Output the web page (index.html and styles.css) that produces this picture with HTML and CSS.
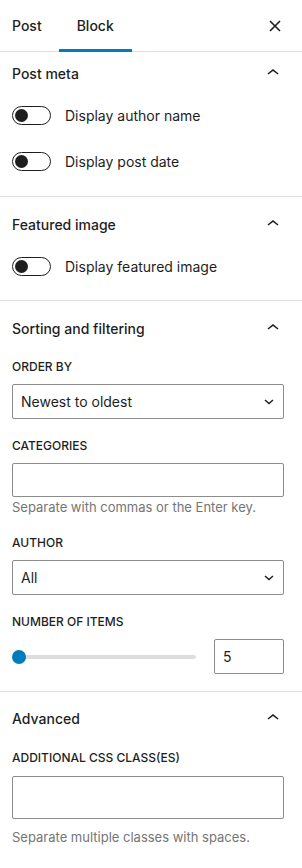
FILE: index.html
```html
<!DOCTYPE html>
<html lang="en">
<head>
    <meta charset="UTF-8">
    <meta name="viewport" content="width=device-width, initial-scale=1.0">
    <title>Block settings</title>
    <link rel="stylesheet" href="styles.css">
</head>
<body>
    <div class="sidebar">
        <div class="tabs">
            <button class="tab tab-first">Post</button>
            <button class="tab is-active">Block</button>
            <button class="close-btn" aria-label="Close settings">
                <svg width="12" height="12" viewBox="0 0 12 12"><path d="M1 1L11 11M11 1L1 11" stroke="#1e1e1e" stroke-width="1.6" fill="none"/></svg>
            </button>
        </div>

        <div class="panel panel-first">
            <div class="panel-title">
                <span>Post meta</span>
                <svg class="chevron" width="24" height="24" viewBox="0 0 24 24"><path d="M6.5 12.4L12 8l5.5 4.4-.9 1.2L12 10l-4.6 3.6-.9-1.2z"/></svg>
            </div>
            <div class="toggle-row">
                <span class="toggle"><span class="knob"></span></span>
                <span>Display author name</span>
            </div>
            <div class="toggle-row">
                <span class="toggle"><span class="knob"></span></span>
                <span>Display post date</span>
            </div>
        </div>

        <div class="panel">
            <div class="panel-title">
                <span>Featured image</span>
                <svg class="chevron" width="24" height="24" viewBox="0 0 24 24"><path d="M6.5 12.4L12 8l5.5 4.4-.9 1.2L12 10l-4.6 3.6-.9-1.2z"/></svg>
            </div>
            <div class="toggle-row">
                <span class="toggle"><span class="knob"></span></span>
                <span>Display featured image</span>
            </div>
        </div>

        <div class="panel panel-fields">
            <div class="panel-title">
                <span>Sorting and filtering</span>
                <svg class="chevron" width="24" height="24" viewBox="0 0 24 24"><path d="M6.5 12.4L12 8l5.5 4.4-.9 1.2L12 10l-4.6 3.6-.9-1.2z"/></svg>
            </div>
            <div class="field">
                <div class="field-label">Order by</div>
                <div class="select">
                    <span>Newest to oldest</span>
                    <svg width="10" height="6" viewBox="0 0 10 6"><path d="M1 1l4 3.5L9 1" stroke="#1e1e1e" stroke-width="1.5" fill="none"/></svg>
                </div>
            </div>
            <div class="field">
                <div class="field-label">Categories</div>
                <div class="text-input"></div>
                <p class="help help-tight">Separate with commas or the Enter key.</p>
            </div>
            <div class="field">
                <div class="field-label">Author</div>
                <div class="select">
                    <span>All</span>
                    <svg width="10" height="6" viewBox="0 0 10 6"><path d="M1 1l4 3.5L9 1" stroke="#1e1e1e" stroke-width="1.5" fill="none"/></svg>
                </div>
            </div>
            <div class="field">
                <div class="field-label">Number of items</div>
                <div class="range-row">
                    <div class="range">
                        <div class="range-track"></div>
                        <div class="range-thumb"></div>
                    </div>
                    <div class="number-input">5</div>
                </div>
            </div>
        </div>

        <div class="panel panel-fields panel-last">
            <div class="panel-title">
                <span>Advanced</span>
                <svg class="chevron" width="24" height="24" viewBox="0 0 24 24"><path d="M6.5 12.4L12 8l5.5 4.4-.9 1.2L12 10l-4.6 3.6-.9-1.2z"/></svg>
            </div>
            <div class="field field-advanced">
                <div class="field-label">Additional CSS class(es)</div>
                <div class="text-input text-input-tall"></div>
                <p class="help">Separate multiple classes with spaces.</p>
            </div>
        </div>
    </div>
</body>
</html>
```

FILE: styles.css
```css
* {
    box-sizing: border-box;
    font-family: Inter, "Noto Sans", sans-serif;
}

body {
    margin: 0;
    background: #ffffff;
    color: #1e1e1e;
    font-size: 14px;
}

.sidebar {
    width: 302px;
}

/* 탭 영역 */
.tabs {
    display: flex;
    align-items: stretch;
    height: 52px;
    border-bottom: 1px solid #e0e0e0;
}

.tab {
    position: relative;
    background: none;
    border: none;
    padding: 0 18px;
    font-size: 14px;
    font-weight: 500;
    color: #1e1e1e;
    cursor: pointer;
}

.tab-first {
    padding-left: 12px;
    padding-right: 17px;
}

.tab.is-active::after {
    content: "";
    position: absolute;
    left: 0;
    right: 0;
    bottom: -1px;
    height: 3px;
    background: #007cba;
}

.close-btn {
    margin-left: auto;
    margin-right: 21px;
    background: none;
    border: none;
    padding: 0;
    display: flex;
    align-items: center;
    cursor: pointer;
}

/* 패널 */
.panel {
    padding: 6px 18px 24px 12px;
    border-bottom: 1px solid #e0e0e0;
}

.panel-first {
    padding-top: 0;
    padding-bottom: 25px;
}

.panel-fields {
    padding-bottom: 17px;
}

.panel-last {
    padding-top: 5px;
    border-bottom: none;
}

.panel-title {
    display: flex;
    align-items: center;
    justify-content: space-between;
    height: 42px;
    font-weight: 500;
}

.chevron {
    fill: #1e1e1e;
    margin-right: -1px;
}

/* 토글 */
.toggle-row {
    display: flex;
    align-items: center;
    gap: 14px;
    height: 20px;
    margin-top: 26px;
}

.toggle-row:nth-child(2) {
    margin-top: 11px;
}

.toggle {
    position: relative;
    width: 39px;
    height: 19px;
    border: 1px solid #1e1e1e;
    border-radius: 10px;
    flex-shrink: 0;
}

.knob {
    position: absolute;
    top: 2px;
    left: 2px;
    width: 13px;
    height: 13px;
    border-radius: 50%;
    background: #1e1e1e;
}

/* 입력 필드 */
.field {
    margin-top: 19px;
}

.panel-title + .field {
    margin-top: 10px;
}

.panel-title + .field.field-advanced {
    margin-top: 11px;
}

.field-label {
    height: 16px;
    line-height: 16px;
    font-size: 12px;
    font-weight: 500;
    text-transform: uppercase;
    margin-bottom: 9px;
}

.field-advanced .field-label {
    margin-bottom: 10px;
}

.select {
    display: flex;
    align-items: center;
    justify-content: space-between;
    height: 35px;
    padding: 0 9px 0 8px;
    border: 1px solid #8c8c8c;
    border-radius: 2px;
}

.text-input {
    height: 34px;
    border: 1px solid #8c8c8c;
    border-radius: 2px;
}

.text-input-tall {
    height: 43px;
}

.help {
    margin: 9px 0 0;
    font-size: 13px;
    line-height: 18px;
    color: #757575;
}

.help.help-tight {
    margin-top: 1px;
}

/* 슬라이더 */
.range-row {
    display: flex;
    align-items: center;
    gap: 18px;
    height: 35px;
}

.range {
    position: relative;
    flex: 1;
    height: 14px;
}

.range-track {
    position: absolute;
    left: 0;
    right: 0;
    top: 5px;
    height: 4px;
    border-radius: 2px;
    background: #dddddd;
}

.range-thumb {
    position: absolute;
    left: 0;
    top: 0;
    width: 14px;
    height: 14px;
    border-radius: 50%;
    background: #007cba;
}

.number-input {
    width: 70px;
    height: 35px;
    line-height: 33px;
    padding-left: 8px;
    border: 1px solid #8c8c8c;
    border-radius: 2px;
}
```
